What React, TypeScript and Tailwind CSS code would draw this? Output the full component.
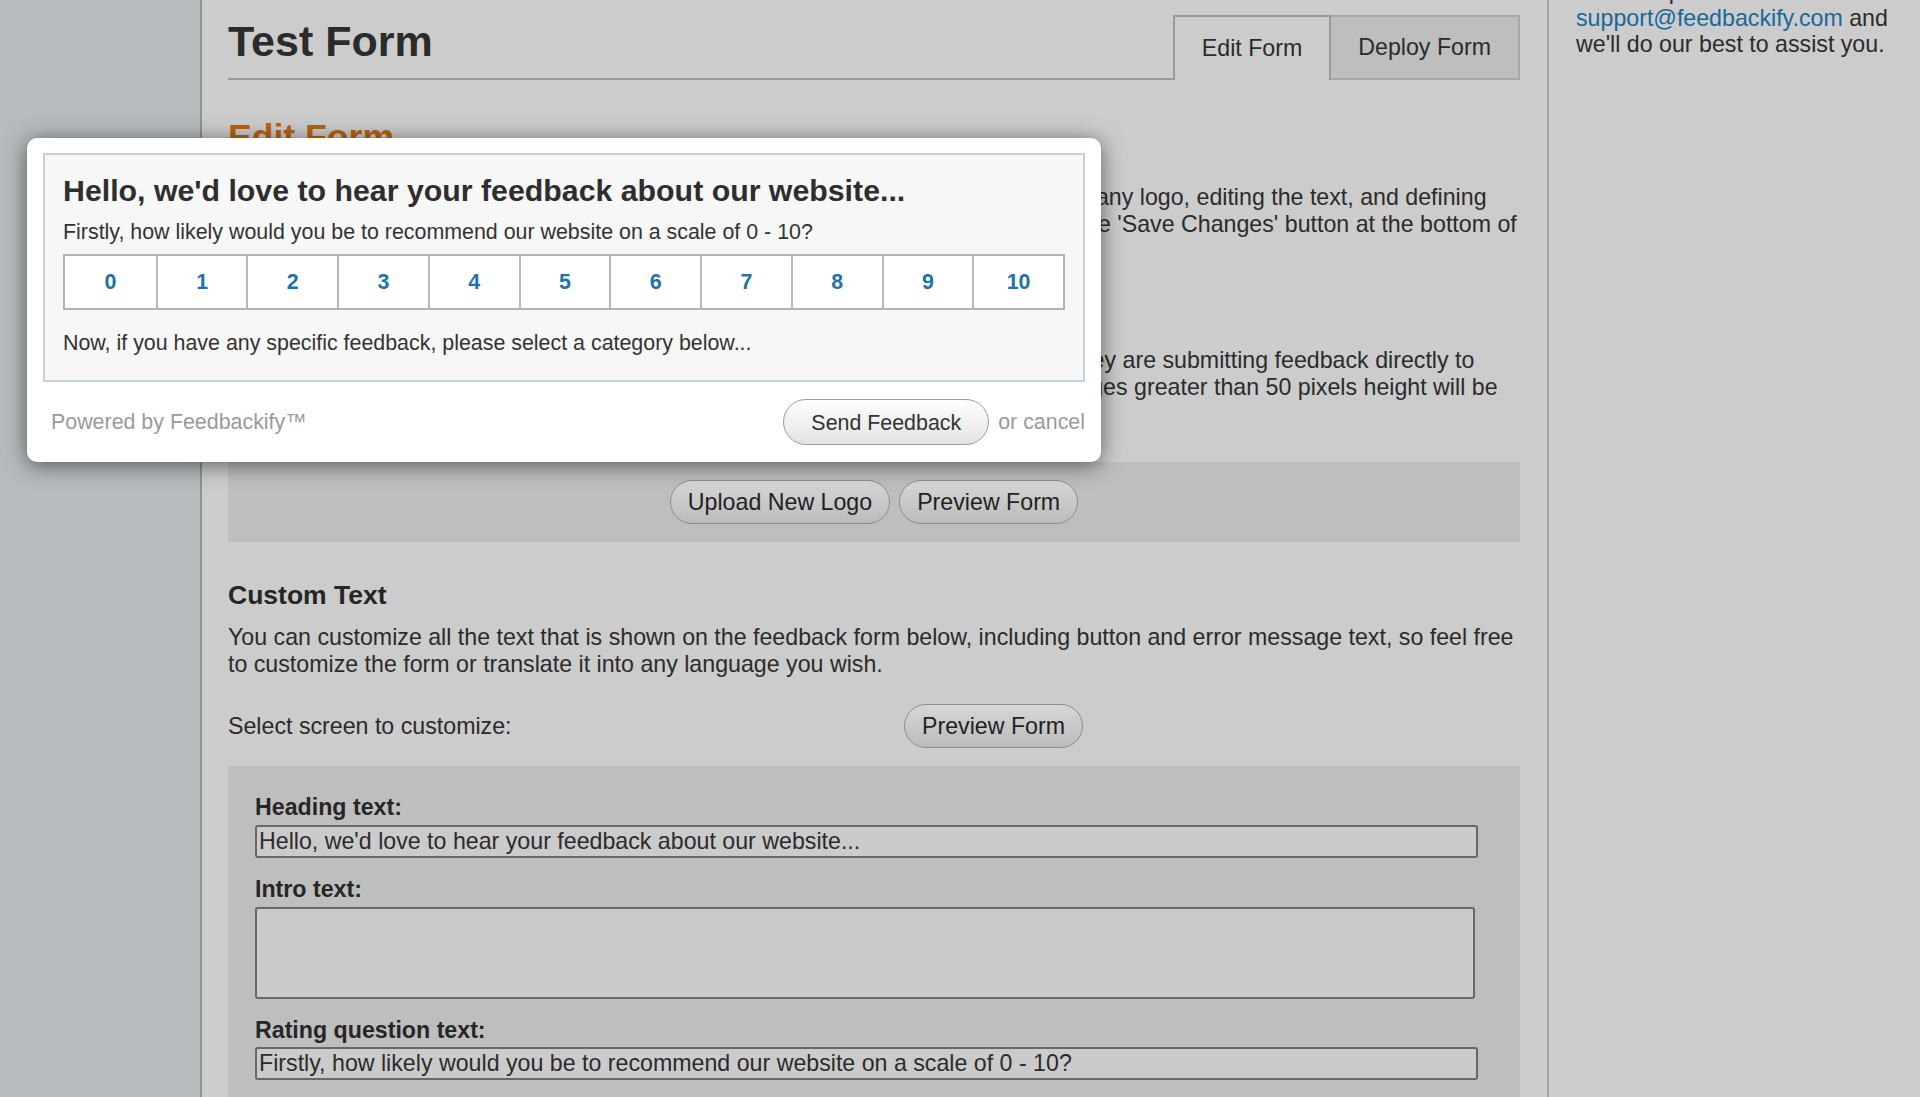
import React from "react";

const GrayBtn = ({ children }: { children: React.ReactNode }) => (
  <button className="h-[44px] px-[17px] rounded-full border-[1.5px] border-[#8e8e8e] bg-linear-to-b from-[#d7d7d7] to-[#bbbbbb] text-[23.2px] leading-none text-[#222]">
    {children}
  </button>
);

const Label = ({ children, first }: { children: React.ReactNode; first?: boolean }) => (
  <div className={`${first ? "" : "mt-[18px]"} text-[23.2px] leading-[1.15] font-bold text-[#262626]`}>{children}</div>
);

export default function App() {
  const nums = [0, 1, 2, 3, 4, 5, 6, 7, 8, 9, 10];
  return (
    <div className="relative flex h-[1097px] w-[1920px] overflow-hidden bg-[#cccccc] font-['Liberation_Sans',Arial,sans-serif] text-[#2b2b2b]">
      <aside className="w-[202px] shrink-0 border-r-2 border-[#8f9396] bg-[#b6bbbe]" />

      <main className="w-[1347px] shrink-0 border-r-2 border-[#a3a3a3] pl-[26px] pr-[27px]">
        <div className="mt-[15px] flex h-[65px]">
          <div className="flex-1 border-b-2 border-[#9a9a9a] pt-[5px]">
            <h1 className="text-[43px] font-bold leading-none text-[#2b2b2b]">Test Form</h1>
          </div>
          <div className="flex h-full items-center border-2 border-b-0 border-[#9a9a9a] px-[27px] text-[23.2px] text-[#2b2b2b]">
            Edit Form
          </div>
          <div className="flex h-full items-center border-2 border-l-0 border-[#a8a8a8] bg-[#bebebe] px-[27px] text-[23.2px] text-[#2b2b2b]">
            Deploy Form
          </div>
        </div>

        <h2 className="mt-[37px] text-[35.6px] font-bold leading-[1.15] text-[#b86510]">Edit Form</h2>
        <p className="mt-[26px] whitespace-nowrap text-[23.2px] leading-[1.15]">
          You can personalize the look and feel of your feedback form by uploading your company logo, editing the text, and defining
          <br />
          the colours and fonts used on the form. When you are finished editing, simply click the 'Save Changes' button at the bottom of
          <br />
          page.
        </p>

        <h3 className="mt-[42px] mb-[11px] text-[26.5px] font-bold leading-[1.15]">Company Logo</h3>
        <p className="whitespace-nowrap text-[23.2px] leading-[1.15]">
          The logo will be displayed at the top of the feedback form so that your users know they are submitting feedback directly to
          <br />
          your business. Logo images should be in JPG, PNG or GIF format and any logo images greater than 50 pixels height will be
          <br />
          resized.
        </p>

        <div className="mt-[35px] flex h-[80px] items-center justify-center gap-[9px] bg-[#bebebe]">
          <GrayBtn>Upload New Logo</GrayBtn>
          <GrayBtn>Preview Form</GrayBtn>
        </div>

        <h3 className="mt-[38px] mb-[13px] text-[26.5px] font-bold leading-[1.15] text-[#262626]">Custom Text</h3>
        <p className="text-[23.2px] leading-[1.15]">
          You can customize all the text that is shown on the feedback form below, including button and error message text, so feel free to customize the form or translate it into any language you wish.
        </p>

        <div className="mt-[27px] flex h-[44px] items-center">
          <div className="w-[676px] shrink-0 text-[23.2px] leading-[1.15]">Select screen to customize:</div>
          <GrayBtn>Preview Form</GrayBtn>
        </div>

        <div className="mt-[18px] bg-[#bebebe] pl-[27px] pr-[42px] pt-[28px] pb-[40px]">
          <Label first>Heading text:</Label>
          <input
            readOnly
            defaultValue="Hello, we'd love to hear your feedback about our website..."
            className="mt-[4px] h-[33px] w-[1223px] rounded-[3px] border-2 border-[#686868] bg-[#cbcbcb] px-[2px] text-[23.2px] leading-[1.15] text-[#2b2b2b] outline-none"
          />
          <Label>Intro text:</Label>
          <textarea
            readOnly
            defaultValue=""
            className="mt-[4px] block h-[92px] w-[1220px] resize-none rounded-[3px] border-2 border-[#686868] bg-[#cbcbcb] px-[2px] text-[23.2px] leading-[1.15] text-[#2b2b2b] outline-none"
          />
          <Label>Rating question text:</Label>
          <input
            readOnly
            defaultValue="Firstly, how likely would you be to recommend our website on a scale of 0 - 10?"
            className="mt-[4px] h-[33px] w-[1223px] rounded-[3px] border-2 border-[#686868] bg-[#cbcbcb] px-[2px] text-[23.2px] leading-[1.15] text-[#2b2b2b] outline-none"
          />
          <Label>Category question text:</Label>
          <input
            readOnly
            defaultValue="Now, if you have any specific feedback, please select a category below..."
            className="mt-[4px] h-[33px] w-[1223px] rounded-[3px] border-2 border-[#686868] bg-[#cbcbcb] px-[2px] text-[23.2px] leading-[1.15] text-[#2b2b2b] outline-none"
          />
        </div>
      </main>

      <aside className="flex-1 pl-[27px]">
        <p className="-mt-[22px] whitespace-nowrap text-[23.2px] leading-[1.15] text-[#2b2b2b]">
          Need help? Email us at
          <br />
          <span className="text-[#19679a]">support@feedbackify.com</span> and
          <br />
          we'll do our best to assist you.
        </p>
      </aside>

      {/* Feedback modal overlay */}
      <div className="absolute left-[27px] top-[138px] h-[324px] w-[1074px] rounded-[10px] bg-white px-[16px] pt-[15px] shadow-[0_3px_22px_rgba(0,0,0,0.55)]">
        <div className="h-[229px] border-2 border-[#c6d0dc] bg-[#f7f7f7] px-[18px] pt-[19px]">
          <div className="text-[30.3px] font-bold leading-[1.15] text-[#2e2e2e]">
            Hello, we'd love to hear your feedback about our website...
          </div>
          <div className="mt-[11px] text-[21.4px] leading-[1.15] text-[#333]">
            Firstly, how likely would you be to recommend our website on a scale of 0 - 10?
          </div>
          <div className="mt-[10px] grid h-[56px] grid-cols-11 border-2 border-[#b3b3b3] bg-white">
            {nums.map((n) => (
              <div
                key={n}
                className={`flex items-center justify-center text-[21.4px] font-bold text-[#2272a7] ${n === 0 ? "" : "border-l-2 border-[#b8b8b8]"}`}
              >
                {n}
              </div>
            ))}
          </div>
          <div className="mt-[21px] text-[21.4px] leading-[1.15] text-[#333]">
            Now, if you have any specific feedback, please select a category below...
          </div>
        </div>
        <div className="flex h-[80px] items-center justify-between pl-[8px]">
          <span className="text-[21.4px] text-[#9a9a9a]">Powered by Feedbackify™</span>
          <div className="flex items-center gap-[9px]">
            <button className="h-[46px] rounded-full border-[1.5px] border-[#9c9c9c] bg-linear-to-b from-white to-[#e3e3e3] px-[27px] pt-[3px] text-[21.4px] leading-none text-[#333]">
              Send Feedback
            </button>
            <span className="text-[21.4px] text-[#9a9a9a]">or cancel</span>
          </div>
        </div>
      </div>
    </div>
  );
}
